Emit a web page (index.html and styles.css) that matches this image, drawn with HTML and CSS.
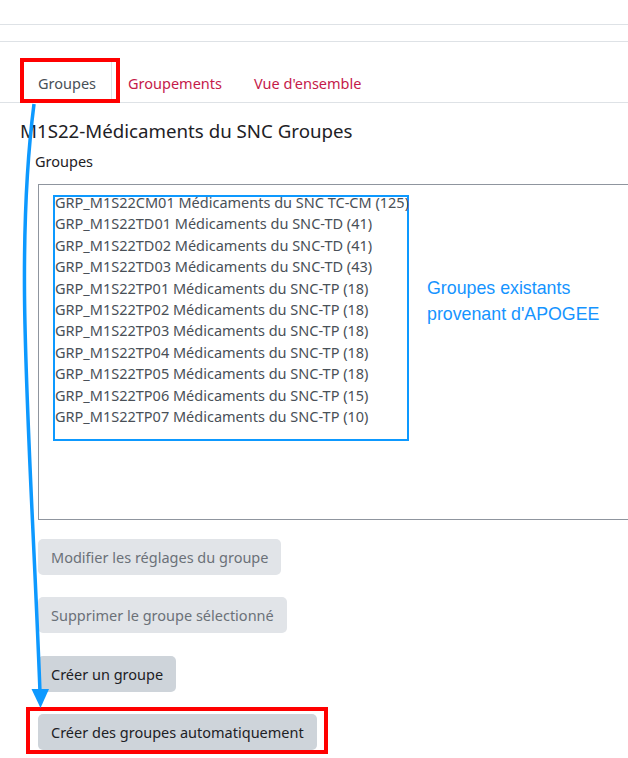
FILE: index.html
```html
<!DOCTYPE html>
<html>

<head>
    <meta name="viewport" content="width=device-width,initial-scale=1.0">
    <title>Groupes</title>
    <link rel="stylesheet" href="styles.css">
</head>

<body>
    <div class="page">
        <div class="topbar"></div>
        <div class="subbar"></div>

        <div class="content">
            <ul class="tabs">
                <li class="tab active">Groupes</li>
                <li class="tab"><a href="#">Groupements</a></li>
                <li class="tab"><a href="#">Vue d'ensemble</a></li>
            </ul>

            <h2 class="title">M1S22-Médicaments du SNC Groupes</h2>

            <div class="field">
                <div class="field-label">Groupes</div>
                <div class="listbox">
                    <div class="options">
                        <div class="option">GRP_M1S22CM01 Médicaments du SNC TC-CM (125)</div>
                        <div class="option">GRP_M1S22TD01 Médicaments du SNC-TD (41)</div>
                        <div class="option">GRP_M1S22TD02 Médicaments du SNC-TD (41)</div>
                        <div class="option">GRP_M1S22TD03 Médicaments du SNC-TD (43)</div>
                        <div class="option">GRP_M1S22TP01 Médicaments du SNC-TP (18)</div>
                        <div class="option">GRP_M1S22TP02 Médicaments du SNC-TP (18)</div>
                        <div class="option">GRP_M1S22TP03 Médicaments du SNC-TP (18)</div>
                        <div class="option">GRP_M1S22TP04 Médicaments du SNC-TP (18)</div>
                        <div class="option">GRP_M1S22TP05 Médicaments du SNC-TP (18)</div>
                        <div class="option">GRP_M1S22TP06 Médicaments du SNC-TP (15)</div>
                        <div class="option">GRP_M1S22TP07 Médicaments du SNC-TP (10)</div>
                    </div>
                    <div class="note">Groupes existants<br>provenant d'APOGEE</div>
                </div>
            </div>

            <div class="actions">
                <button class="btn" disabled>Modifier les réglages du groupe</button>
                <button class="btn" disabled>Supprimer le groupe sélectionné</button>
                <button class="btn">Créer un groupe</button>
                <button class="btn">Créer des groupes automatiquement</button>
            </div>
        </div>

        <!-- highlight frames and the arrow drawn on top -->
        <div class="mark mark-tab"></div>
        <div class="mark mark-auto"></div>
        <svg class="arrow" width="628" height="758" viewBox="0 0 628 758">
            <path d="M34 104 C 14 260, 30 430, 40 692" fill="none" stroke="#0d99ff" stroke-width="3.5" />
            <polygon points="31.5,689 49,689 40.5,708" fill="#0d99ff" />
        </svg>
    </div>
</body>

</html>
```

FILE: styles.css
```css
body {
    margin: 0;
    padding: 0;
    background: #fff;
    font-family: "Noto Sans", "Open Sans", sans-serif;
    color: #1d2125;
    overflow: hidden;
}

.page {
    position: relative;
    width: 628px;
    height: 758px;
    overflow: hidden;
}

.topbar {
    height: 24px;
    border-bottom: 1px solid #dee2e6;
}

.subbar {
    height: 16px;
    border-bottom: 1px solid #dee2e6;
}

.content {
    padding-left: 20px;
}

.tabs {
    list-style: none;
    margin: 16px 0 0 -20px;
    padding: 0 0 0 22px;
    display: flex;
    border-bottom: 1px solid #dee2e6;
}

.tab {
    height: 45px;
    box-sizing: border-box;
    padding: 0 15px 9px;
    display: flex;
    align-items: flex-end;
    font-size: 14.5px;
    line-height: 20px;
    color: #c51a4a;
    border: 1px solid transparent;
    margin-bottom: -1px;
}

.tab a {
    color: #c51a4a;
    text-decoration: none;
}

.tab.active {
    color: #495057;
    border-color: #dee2e6 #dee2e6 #fff;
    background: #fff;
}

.title {
    margin: 15px 0 0;
    font-size: 18.7px;
    font-weight: 400;
    line-height: 26px;
}

.field {
    padding-left: 15px;
}

.field-label {
    margin-top: 7px;
    font-size: 14.5px;
    line-height: 20px;
}

.listbox {
    margin: 13px 0 0 3px;
    width: 620px;
    height: 336px;
    box-sizing: border-box;
    border: 1px solid #8f959e;
    padding: 10px 0 0 14px;
    display: flex;
    align-items: flex-start;
}

.options {
    width: 352px;
    height: 242px;
    border: 2px solid #0d99ff;
}

.option {
    font-size: 14.5px;
    line-height: 21.4px;
    margin-top: -5px;
    margin-bottom: 5px;
    color: #495057;
    white-space: nowrap;
}

.note {
    margin: 80px 0 0 18px;
    font-family: "Liberation Sans", Arial, sans-serif;
    font-size: 17.8px;
    line-height: 26px;
    color: #1594ff;
}

.actions {
    margin: 19px 0 0 18px;
    display: flex;
    flex-direction: column;
    align-items: flex-start;
    gap: 22.3px;
}

.btn {
    font-family: "Noto Sans", "Open Sans", sans-serif;
    font-size: 14.5px;
    height: 36px;
    padding: 0 13px;
    border: none;
    border-radius: 5px;
    background: #ced4da;
    color: #1d2125;
}

.btn:disabled {
    background: #e1e4e8;
    color: #6b7178;
}

.mark {
    position: absolute;
    border: 4px solid #f00;
    box-sizing: border-box;
}

.mark-tab {
    left: 20px;
    top: 58px;
    width: 100px;
    height: 45px;
}

.mark-auto {
    left: 26px;
    top: 707px;
    width: 302px;
    height: 47px;
}

.arrow {
    position: absolute;
    left: 0;
    top: 0;
    pointer-events: none;
}
```
